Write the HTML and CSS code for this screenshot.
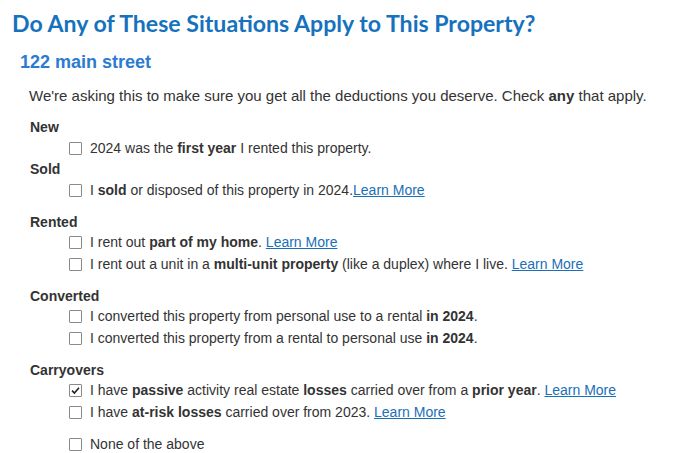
FILE: index.html
```html
<!DOCTYPE html>
<html>
<head>
<meta charset="utf-8">
<link rel="stylesheet" href="styles.css">
</head>
<body>
<div class="page">
  <h1 class="title">Do Any of These Situations Apply to This Property?</h1>
  <h2 class="subtitle">122 main street</h2>
  <p class="intro">We're asking this to make sure you get all the deductions you deserve. Check <b>any</b> that apply.</p>

  <div class="group tight first">
    <div class="label">New</div>
    <label class="item"><span class="box"></span><span>2024 was the <b>first year</b> I rented this property.</span></label>
  </div>
  <div class="group">
    <div class="label">Sold</div>
    <label class="item"><span class="box"></span><span>I <b>sold</b> or disposed of this property in 2024.<a href="#">Learn More</a></span></label>
  </div>
  <div class="group">
    <div class="label">Rented</div>
    <label class="item"><span class="box"></span><span>I rent out <b>part of my home</b>. <a href="#">Learn More</a></span></label>
    <label class="item"><span class="box"></span><span>I rent out a unit in a <b>multi-unit property</b> (like a duplex) where I live. <a href="#">Learn More</a></span></label>
  </div>
  <div class="group">
    <div class="label">Converted</div>
    <label class="item"><span class="box"></span><span>I converted this property from personal use to a rental <b>in 2024</b>.</span></label>
    <label class="item"><span class="box"></span><span>I converted this property from a rental to personal use <b>in 2024</b>.</span></label>
  </div>
  <div class="group">
    <div class="label">Carryovers</div>
    <label class="item"><span class="box checked"><svg viewBox="0 0 13 13" width="13" height="13"><path d="M3 6.7 L5.4 9 L10 3.8" fill="none" stroke="#222" stroke-width="1.6"/></svg></span><span>I have <b>passive</b> activity real estate <b>losses</b> carried over from a <b>prior year</b>. <a href="#">Learn More</a></span></label>
    <label class="item"><span class="box"></span><span>I have <b>at-risk losses</b> carried over from 2023. <a href="#">Learn More</a></span></label>
  </div>
  <div class="group">
    <label class="item"><span class="box"></span><span>None of the above</span></label>
  </div>
</div>
</body>
</html>
```
FILE: styles.css
```css
html, body {
  margin: 0;
  padding: 0;
  background: #fff;
}
.page {
  padding: 9px 12px 0 12px;
  font-family: "Liberation Sans", Arial, sans-serif;
  color: #333;
  font-size: 14px;
}
.title {
  margin: 0;
  font-family: Lato, "Open Sans", sans-serif;
  font-weight: 700;
  font-size: 23.1px;
  line-height: 28px;
  color: #1672bd;
}
.subtitle {
  margin: 14px 0 0 8px;
  font-size: 18px;
  line-height: 22px;
  font-weight: 700;
  color: #2b7bd0;
}
.intro {
  margin: 13px 0 0 17px;
  font-size: 15px;
  line-height: 20px;
}
.group {
  margin: 0 0 0 18px;
  padding-top: 10.5px;
}
.group.first {
  padding-top: 11px;
}
.group.tight + .group {
  padding-top: 0;
}
.label {
  font-weight: 700;
  line-height: 20.5px;
}
.item {
  display: flex;
  align-items: center;
  gap: 8px;
  margin-left: 39px;
  line-height: 21px;
  height: 21.5px;
}
.box {
  width: 11px;
  height: 11px;
  border: 1px solid #8a8a8a;
  border-radius: 1px;
  flex: none;
  position: relative;
  background: #fff;
}
.box svg {
  position: absolute;
  left: -1px;
  top: -1px;
}
a {
  color: #1a6fb8;
  text-decoration: underline;
}
```
